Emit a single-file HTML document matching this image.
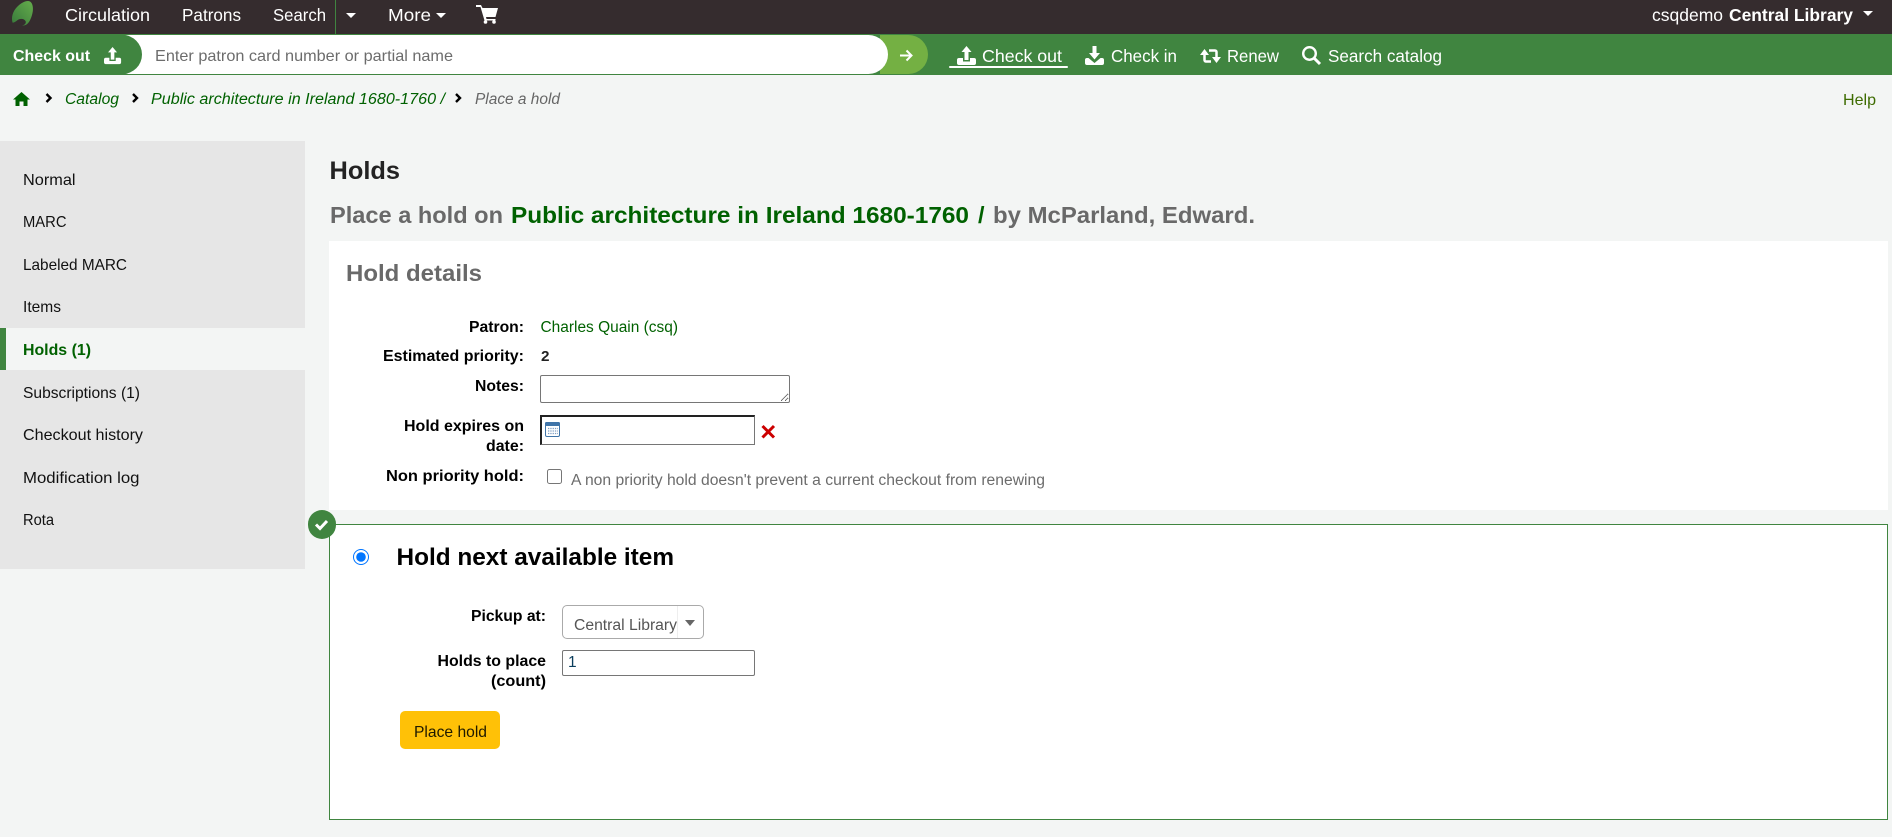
<!DOCTYPE html>
<html lang="en"><head><meta charset="utf-8"><title>Place a hold</title>
<style>
html,body{margin:0;padding:0;background:#f3f5f4;width:1892px;height:837px;overflow:hidden;font-family:"Liberation Sans",sans-serif}
.b{position:absolute;box-sizing:border-box}
svg#t{position:absolute;left:0;top:0;width:1892px;height:837px;pointer-events:none}
svg text{font-family:"Liberation Sans",sans-serif}
.nav{font-size:17.5px;fill:#fff}
.s{font-size:16px;fill:#111}
.l{font-size:15.5px;font-weight:700;fill:#000}
.c{font-size:17.5px;fill:#fff}
.i{font-size:15.5px;font-style:italic}
input,textarea{margin:0;position:absolute;box-sizing:border-box}
</style></head><body>
<div class="b" style="left:0;top:0;width:1892px;height:34px;background:#352c2e"></div>
<div class="b" style="left:0;top:34px;width:1892px;height:41px;background:#408540"></div>
<div class="b" style="left:335px;top:0;width:1px;height:34px;background:#408540"></div>
<div class="b" style="left:880px;top:35px;width:48px;height:39px;background:#74b043;border-radius:0 20px 20px 0"></div>
<div class="b" style="left:110px;top:35px;width:778px;height:39px;background:#fff;border-radius:20px"></div>
<div class="b" style="left:0;top:35px;width:142px;height:39px;background:#408540;border-radius:0 20px 20px 0"></div>
<div class="b" style="left:949px;top:66px;width:119px;height:2px;background:#fff;border-radius:1px"></div>

<div class="b" style="left:0;top:141px;width:305px;height:428px;background:#e6e6e6"></div>
<div class="b" style="left:0;top:328px;width:305px;height:42px;background:#f3f5f4;border-left:6px solid #408540"></div>

<div class="b" style="left:329px;top:241px;width:1559px;height:269px;background:#fff"></div>
<div class="b" style="left:329px;top:524px;width:1559px;height:296px;background:#fff;border:1px solid #408540"></div>
<div class="b" style="left:307.5px;top:510px;width:28.5px;height:28.5px;background:#408540;border-radius:50%"></div>

<textarea style="left:540px;top:375px;width:250px;height:28px;border:1px solid #767676;border-radius:2px;background:#fff"></textarea>
<input type="text" style="left:540px;top:415px;width:215px;height:30px;border:1px solid #767676;border-top:2px solid #222;border-left:2px solid #222;background:#fff">
<input type="checkbox" style="left:547px;top:469px;width:15px;height:15px">
<input type="radio" checked style="left:353px;top:549px;width:16px;height:16px">
<div class="b" style="left:562px;top:605px;width:142px;height:34px;background:#fff;border:1px solid #aaa;border-radius:5px"></div>
<div class="b" style="left:677px;top:606px;width:1px;height:32px;background:#eee"></div>
<input type="text" value="1" style="left:562px;top:650px;width:193px;height:26px;border:1px solid #767676;border-radius:2px;padding:0 0 0 5px;font:15.5px 'Liberation Sans',sans-serif;color:#0b3d5c;background:#fff">
<div class="b" style="left:400px;top:711px;width:100px;height:38px;background:#ffc107;border-radius:5px"></div>

<svg id="t" viewBox="0 0 1892 837" xmlns="http://www.w3.org/2000/svg">
<defs><linearGradient id="lf" x1="1" y1="0" x2="0" y2="1"><stop offset="0" stop-color="#65ad4c"/><stop offset="1" stop-color="#38793b"/></linearGradient></defs>
<path d="M28 1C33 1 34 9 32 15C30 22 27 26 22 25.5C25 25 26.500 23 25.500 21C24 18.500 20 18 17 20.500C15.500 21.500 14 23 12.500 22.500C11 17 13 11 17 7C20 4 24 1 28 1Z" fill="url(#lf)"/>
<text class="nav" x="65" y="21" textLength="85" lengthAdjust="spacingAndGlyphs">Circulation</text>
<text class="nav" x="182" y="21" textLength="59" lengthAdjust="spacingAndGlyphs">Patrons</text>
<text class="nav" x="273" y="21" textLength="53" lengthAdjust="spacingAndGlyphs">Search</text>
<path d="M346 13h10l-5 5z" fill="#fff"/>
<text class="nav" x="388" y="21" textLength="43" lengthAdjust="spacingAndGlyphs">More</text>
<path d="M436 13h10l-5 5z" fill="#fff"/>
<g fill="#fff"><path d="M476 5h5l1.500 3H498l-2.500 9H486l.5 2h9v1.500h-11L480.500 7H476z"/><circle cx="485.500" cy="22" r="1.800"/><circle cx="494" cy="22" r="1.800"/></g>
<text x="1652" y="21" font-size="17.500" fill="#fff" textLength="71" lengthAdjust="spacingAndGlyphs">csqdemo</text>
<text x="1729" y="21" font-size="17.500" font-weight="700" fill="#fff" textLength="124" lengthAdjust="spacingAndGlyphs">Central Library</text>
<path d="M1863 11h10l-5 5z" fill="#fff"/>

<text x="13" y="61" font-size="16" font-weight="700" fill="#fff" textLength="77" lengthAdjust="spacingAndGlyphs">Check out</text>
<g transform="translate(104,47) scale(.9)" fill="#fff"><path d="M9.500 0L14.500 6H11.500V14H7.500V6H4.500Z"/><path d="M0 14a2 2 0 0 1 2-2H6V15.500H13V12H17a2 2 0 0 1 2 2v3a2 2 0 0 1-2 2H2a2 2 0 0 1-2-2Z"/></g>
<text x="155" y="61" font-size="16" fill="#6c6c6c" textLength="298" lengthAdjust="spacingAndGlyphs">Enter patron card number or partial name</text>
<path d="M900 55.500h11M906.500 50.500l5 5-5 5" stroke="#fff" stroke-width="2" fill="none"/>

<g transform="translate(957,46)" fill="#fff"><path d="M9.500 0L14.500 6H11.500V14H7.500V6H4.500Z"/><path d="M0 14a2 2 0 0 1 2-2H6V15.500H13V12H17a2 2 0 0 1 2 2v3a2 2 0 0 1-2 2H2a2 2 0 0 1-2-2Z"/></g>
<text class="c" x="982" y="62" textLength="80" lengthAdjust="spacingAndGlyphs">Check out</text>
<g transform="translate(1085,46)" fill="#fff"><path d="M7.500 0H11.500V7H15L9.500 13.500L4 7H7.500Z"/><path d="M0 14a2 2 0 0 1 2-2H3.500L9.500 17L15.500 12H17a2 2 0 0 1 2 2v3a2 2 0 0 1-2 2H2a2 2 0 0 1-2-2Z"/></g>
<text class="c" x="1111" y="62" textLength="66" lengthAdjust="spacingAndGlyphs">Check in</text>
<g transform="translate(1200,49)"><path d="M4.500 5V11a1.500 1.500 0 0 0 1.500 1.500H11M16.500 9V3a1.500 1.500 0 0 0-1.500-1.500H9" stroke="#fff" stroke-width="2.500" fill="none"/><path d="M0 6L4.500 0L9 6ZM12 8L16.500 14L21 8Z" fill="#fff"/></g>
<text class="c" x="1227" y="62" textLength="52" lengthAdjust="spacingAndGlyphs">Renew</text>
<circle cx="1309.500" cy="53.500" r="6.300" stroke="#fff" stroke-width="2.400" fill="none"/><path d="M1314 58l6 6" stroke="#fff" stroke-width="3" fill="none"/>
<text class="c" x="1328" y="62" textLength="114" lengthAdjust="spacingAndGlyphs">Search catalog</text>

<path d="M21.500 92L30 99.500H27.500V106H23.500V101.500H19.500V106H15.500V99.500H13Z" fill="#006100"/>
<g stroke="#000" stroke-width="2.400" fill="none"><path d="M46.500 94l4 4-4 4"/><path d="M133 94l4 4-4 4"/><path d="M456 94l4 4-4 4"/></g>
<text class="i" fill="#006100" x="65" y="104" textLength="54" lengthAdjust="spacingAndGlyphs">Catalog</text>
<text class="i" fill="#006100" x="151" y="104" textLength="294" lengthAdjust="spacingAndGlyphs">Public architecture in Ireland 1680-1760 /</text>
<text class="i" fill="#666" x="475" y="104" textLength="85" lengthAdjust="spacingAndGlyphs">Place a hold</text>
<text x="1843" y="105" font-size="16" fill="#3d6b00" textLength="33" lengthAdjust="spacingAndGlyphs">Help</text>

<text class="s" x="23" y="185" textLength="52.500" lengthAdjust="spacingAndGlyphs">Normal</text>
<text class="s" x="23" y="227" textLength="43.500" lengthAdjust="spacingAndGlyphs">MARC</text>
<text class="s" x="23" y="270" textLength="104" lengthAdjust="spacingAndGlyphs">Labeled MARC</text>
<text class="s" x="23" y="312" textLength="38" lengthAdjust="spacingAndGlyphs">Items</text>
<text class="s" x="23" y="355" textLength="68" lengthAdjust="spacingAndGlyphs" style="font-weight:700;fill:#006100">Holds (1)</text>
<text class="s" x="23" y="398" textLength="117" lengthAdjust="spacingAndGlyphs">Subscriptions (1)</text>
<text class="s" x="23" y="440" textLength="120" lengthAdjust="spacingAndGlyphs">Checkout history</text>
<text class="s" x="23" y="483" textLength="116.500" lengthAdjust="spacingAndGlyphs">Modification log</text>
<text class="s" x="23" y="525" textLength="31" lengthAdjust="spacingAndGlyphs">Rota</text>

<text x="329.500" y="179" font-size="25" font-weight="700" fill="#232323" textLength="70.500" lengthAdjust="spacingAndGlyphs">Holds</text>
<g font-size="23.500" font-weight="700">
<text x="330" y="223" fill="#696969" textLength="173" lengthAdjust="spacingAndGlyphs">Place a hold on</text>
<text x="511" y="223" fill="#006100" textLength="458" lengthAdjust="spacingAndGlyphs">Public architecture in Ireland 1680-1760</text>
<text x="978" y="223" fill="#006100">/</text>
<text x="993" y="223" fill="#696969" textLength="262" lengthAdjust="spacingAndGlyphs">by McParland, Edward.</text>
<text x="346" y="281" fill="#696969" textLength="136" lengthAdjust="spacingAndGlyphs">Hold details</text>
</g>

<text class="l" x="469" y="332" textLength="55" lengthAdjust="spacingAndGlyphs">Patron:</text>
<text x="540.500" y="332" font-size="15.500" fill="#006100" textLength="137.500" lengthAdjust="spacingAndGlyphs">Charles Quain (csq)</text>
<text class="l" x="383" y="361" textLength="141" lengthAdjust="spacingAndGlyphs">Estimated priority:</text>
<text x="541" y="361" font-size="15" font-weight="700" fill="#222" textLength="8.500" lengthAdjust="spacingAndGlyphs">2</text>
<text class="l" x="475" y="391" textLength="49" lengthAdjust="spacingAndGlyphs">Notes:</text>
<text class="l" x="404" y="431" textLength="120" lengthAdjust="spacingAndGlyphs">Hold expires on</text>
<text class="l" x="486" y="451" textLength="38" lengthAdjust="spacingAndGlyphs">date:</text>
<text class="l" x="386" y="481" textLength="138" lengthAdjust="spacingAndGlyphs">Non priority hold:</text>
<text x="571" y="485" font-size="15.500" fill="#6c6c6c" textLength="474" lengthAdjust="spacingAndGlyphs">A non priority hold doesn't prevent a current checkout from renewing</text>

<g transform="translate(545,422)"><rect x=".5" y=".5" width="14" height="14" rx="1.500" fill="#fff" stroke="#3f74a8"/><rect x="0" y="0" width="15" height="4" rx="1.500" fill="#3f74a8"/><path d="M3 6.500h10M3 9h10M3 11.500h10" stroke="#7f9fc4" stroke-width="1.300" stroke-dasharray="1.300 1"/></g>
<path d="M762.500 426l11.500 11.500M774 426l-11.500 11.500" stroke="#cc0000" stroke-width="3" fill="none"/>

<path d="M316 524.500l4 4 7-7.500" stroke="#fff" stroke-width="3" fill="none"/>
<text x="396.500" y="565" font-size="24" font-weight="700" fill="#000" textLength="277.500" lengthAdjust="spacingAndGlyphs">Hold next available item</text>
<text class="l" x="471" y="621" textLength="75" lengthAdjust="spacingAndGlyphs">Pickup at:</text>
<text x="574" y="630" font-size="15.500" fill="#555" textLength="103" lengthAdjust="spacingAndGlyphs">Central Library</text>
<path d="M685 620h10l-5 6z" fill="#666"/>
<text class="l" x="437.500" y="666" textLength="108.500" lengthAdjust="spacingAndGlyphs">Holds to place</text>
<text class="l" x="491" y="686" textLength="55" lengthAdjust="spacingAndGlyphs">(count)</text>
<text x="414" y="737" font-size="16" fill="#1f1a00" textLength="73" lengthAdjust="spacingAndGlyphs">Place hold</text>
</svg>
</body></html>
